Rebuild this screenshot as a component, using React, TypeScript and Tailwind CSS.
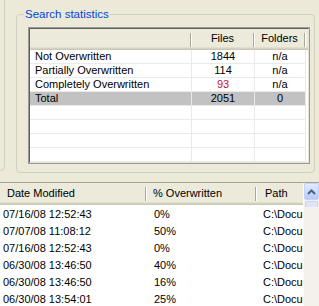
import * as React from "react";

const statRows = [
  { label: "Not Overwritten", files: "1844", folders: "n/a" },
  { label: "Partially Overwritten", files: "114", folders: "n/a" },
  { label: "Completely Overwritten", files: "93", folders: "n/a", red: true },
  { label: "Total", files: "2051", folders: "0", total: true },
];

const fileRows = [
  { date: "07/16/08 12:52:43", pct: "0%" },
  { date: "07/07/08 11:08:12", pct: "50%" },
  { date: "07/16/08 12:52:43", pct: "0%" },
  { date: "06/30/08 13:46:50", pct: "40%" },
  { date: "06/30/08 13:46:50", pct: "16%" },
  { date: "06/30/08 13:54:01", pct: "25%" },
];

function HeaderDivider() {
  return <div className="w-[2px] h-[14px] self-center border-l border-r border-l-[#ACA899] border-r-white" />;
}

function StatsList() {
  const empty = [0, 1, 2, 3];
  return (
    <div className="ml-[11px] mt-[12px] w-[282px] h-[137px] border border-[#9A9A9A]">
      <div className="w-full h-full border-t border-l border-t-[#5F5F5F] border-l-[#5F5F5F] border-r border-b border-r-[#E4E2D6] border-b-[#E4E2D6] bg-white overflow-hidden">
        <div className="flex h-[21px] bg-[#EBEADB] shadow-[inset_0_-1px_0_#CBC7B8,inset_0_-2px_0_#D6D2C2,inset_0_-3px_0_#E2DECD]">
          <div className="w-[160px]" />
          <HeaderDivider />
          <div className="w-[61px] text-center leading-[19px]">Files</div>
          <HeaderDivider />
          <div className="w-[49px] text-center leading-[19px]">Folders</div>
          <HeaderDivider />
        </div>
        {statRows.map((r) => (
          <div key={r.label} className="flex h-[14px] leading-[13px]">
            <div className={`w-[276px] flex border-b border-[#EAEAEA] ${r.total ? "bg-[#C2C2C2]" : ""}`}>
              <div className="w-[162px] pl-[5px] border-r border-[#EAEAEA] whitespace-nowrap">{r.label}</div>
              <div className={`w-[63px] text-center border-r border-[#EAEAEA] ${r.red ? "text-[#C8102E]" : ""}`}>{r.files}</div>
              <div className="w-[51px] text-center border-r border-[#EAEAEA]">{r.folders}</div>
            </div>
          </div>
        ))}
        {empty.map((i) => (
          <div key={i} className="flex h-[14px]">
            <div className="w-[276px] flex border-b border-[#EAEAEA]">
              <div className="w-[162px] border-r border-[#EAEAEA]" />
              <div className="w-[63px] border-r border-[#EAEAEA]" />
              <div className="w-[51px] border-r border-[#EAEAEA]" />
            </div>
          </div>
        ))}
      </div>
    </div>
  );
}

function ScrollBar() {
  return (
    <div className="w-[16px] flex flex-col bg-[#F3F1EA] border-l border-[#FBFAF6]">
      <div className="h-[17px] rounded-[2px] border border-[#C3D3FD] bg-gradient-to-b from-[#E3EBFE] to-[#B7CAF5] flex items-center justify-center">
        <svg width="9" height="6" viewBox="0 0 9 6">
          <polyline points="1,5 4.5,1.5 8,5" fill="none" stroke="#4D6185" strokeWidth="2" />
        </svg>
      </div>
      <div className="mt-[1px] h-[6px] mx-[1px] rounded-t-[2px] border border-b-0 border-[#C8D4F6] bg-[#DCE5FB]" />
      <div className="flex-1" />
    </div>
  );
}

export default function App() {
  return (
    <div className="w-[319px] h-[306px] overflow-hidden bg-[#ECE9D8] text-black text-[11px] font-['Liberation_Sans',Arial,sans-serif]">
      <div className="flex h-[182px]">
        <div className="w-[5px] h-[171px] border-r border-b border-[#D0D0BF] rounded-br-[5px]" />
        <div className="relative ml-[11px] mt-[14px] w-[299px] h-[159px] border border-[#D0D0BF] rounded-[4px]">
          <div className="absolute left-[7px] top-[-8px] px-[1px] bg-[#ECE9D8] text-[#0046D5] leading-[14px] text-[11.5px]">
            Search statistics
          </div>
          <StatsList />
        </div>
      </div>
      <div className="flex h-[124px] border-t border-[#A5A497]">
        <div className="w-[303px] flex flex-col bg-white overflow-hidden">
          <div className="flex h-[22px] shrink-0 bg-[#EBEADB] shadow-[inset_0_-1px_0_#CBC7B8,inset_0_-2px_0_#D6D2C2,inset_0_-3px_0_#E2DECD]">
            <div className="w-[145px] pl-[7px] leading-[21px] whitespace-nowrap">Date Modified</div>
            <HeaderDivider />
            <div className="w-[108px] pl-[6px] leading-[21px] whitespace-nowrap">% Overwritten</div>
            <HeaderDivider />
            <div className="w-[44px] pl-[8px] leading-[21px] whitespace-nowrap">Path</div>
          </div>
          <div className="h-[1px] shrink-0" />
          {fileRows.map((r, i) => (
            <div key={i} className="flex h-[17px] shrink-0 leading-[17px] whitespace-nowrap">
              <div className="w-[147px] pl-[3px]">{r.date}</div>
              <div className="w-[110px] pl-[7px]">{r.pct}</div>
              <div className="w-[46px] pl-[6px]">C:\Docu</div>
            </div>
          ))}
        </div>
        <ScrollBar />
      </div>
    </div>
  );
}
